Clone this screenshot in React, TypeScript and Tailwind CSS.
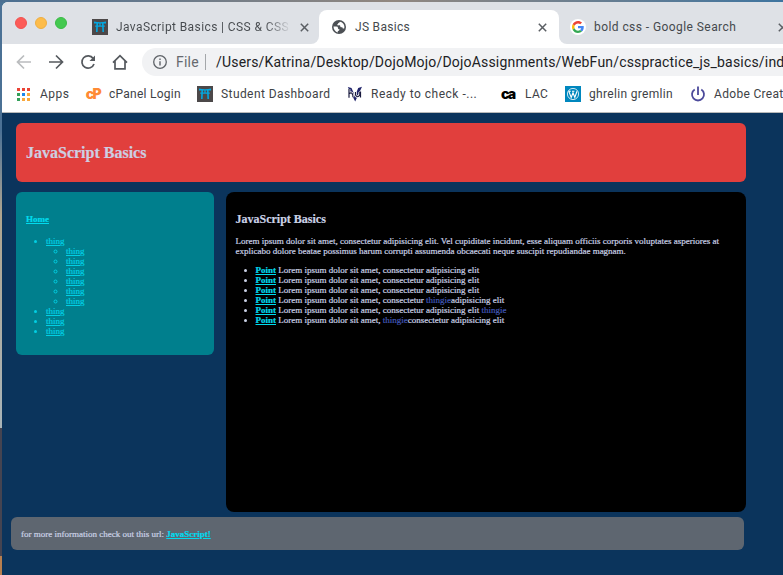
import React from 'react';

const PAGE = 'font-["Liberation_Serif",serif]';
const LINK = 'underline text-[#00dbee]';

function Torii({ className = '' }: { className?: string }) {
  return (
    <svg className={'shrink-0 ' + className} width="16" height="16" viewBox="0 0 16 16">
      <rect width="16" height="16" fill="#4c4849" />
      <path d="M2 2.6Q8 4 14 2.6V4.6H2ZM3.2 6.4H12.8V7.7H3.2ZM4.4 4.5H6L5.6 13H4ZM10 4.5H11.6L12 13H10.4ZM7.4 4.5H8.6V7H7.4Z" fill="#02a8e2" />
    </svg>
  );
}

function Close() {
  return (
    <svg className="shrink-0" width="9" height="9" viewBox="0 0 9 9" fill="none" stroke="#5a5e63" strokeWidth="1.5">
      <path d="M.8.8 8.2 8.2M8.2.8.8 8.2" />
    </svg>
  );
}

function Tabs() {
  return (
    <div className="flex h-[42px] pt-2 rounded-tl-md bg-[#dee1e6] shrink-0">
      <div className="flex w-[90px] gap-2 pl-[13px] pt-[7px]">
        <span className="size-3 rounded-full bg-[#fc5b57] border border-[#f15350]" />
        <span className="size-3 rounded-full bg-[#fdbc4a] border border-[#eeae42]" />
        <span className="size-3 rounded-full bg-[#44c950] border border-[#3abb46]" />
      </div>
      <div className="flex w-[227px] items-center">
        <Torii />
        <span className="ml-2 w-[175px] overflow-hidden whitespace-nowrap text-[12px] tracking-[0.4px] text-transparent bg-clip-text bg-linear-to-r from-[#45494d] from-85% to-[#dee1e6]">
          JavaScript Basics | CSS &amp; CSS
        </span>
        <span className="ml-[9px]"><Close /></span>
      </div>
      <div className="relative flex w-[240px] items-center rounded-t-lg bg-white">
        <span className="absolute bottom-0 -left-2 size-2 bg-white"><i className="block size-2 rounded-br-lg bg-[#dee1e6]" /></span>
        <span className="absolute bottom-0 -right-2 size-2 bg-white"><i className="block size-2 rounded-bl-lg bg-[#dee1e6]" /></span>
        <svg className="ml-[13px]" width="14" height="14" viewBox="0 0 14 14">
          <circle cx="7" cy="7" r="7" fill="#4c5055" />
          <path d="M1.5 6.6H4.3Q6 6.6 6 8T7 9.3 7.2 10.3 6 11 5.9 12.5C3.3 12 1.4 9.5 1.5 6.6ZM7.9 1.7C7.9 2.7 6.2 2.6 6.1 3.4S4.9 4.3 5.3 5.1 7.8 4.8 8.2 5.8 8 7.2 9 7.3 10.5 7.2 10.6 8 11.8 8.5 12.3 8.2C13 5 11 2.2 7.9 1.7Z" fill="#fff" />
        </svg>
        <span className="ml-[9px] w-[183px] text-[12px] tracking-[0.3px] text-[#45494d]">JS Basics</span>
        <Close />
      </div>
      <div className="flex flex-1 items-center overflow-hidden">
        <span className="ml-[11px] flex size-4 shrink-0 items-center justify-center rounded-full bg-white">
          <svg width="12" height="12" viewBox="0 0 48 48">
            <path fill="#EA4335" d="M24 9.5c3.5 0 6.7 1.2 9.2 3.6l6.9-6.9C35.9 2.4 30.5 0 24 0 14.6 0 6.5 5.4 2.6 13.2l8 6.2C12.4 13.7 17.7 9.5 24 9.5z" />
            <path fill="#4285F4" d="M47 24.6c0-1.6-.2-3.1-.4-4.6H24v9h12.9c-.6 3-2.2 5.5-4.7 7.2l7.7 6C44.4 38 47 31.9 47 24.6z" />
            <path fill="#FBBC05" d="M10.5 28.6c-.5-1.5-.8-3-.8-4.6s.3-3.1.8-4.6l-8-6.2C.9 16.5 0 20.1 0 24s.9 7.5 2.6 10.8z" />
            <path fill="#34A853" d="M24 48c6.5 0 11.9-2.1 15.9-5.8l-7.7-6c-2.2 1.5-4.9 2.3-8.2 2.3-6.3 0-11.6-4.2-13.5-9.9l-8 6.2C6.5 42.6 14.6 48 24 48z" />
          </svg>
        </span>
        <span className="ml-2 w-[184px] shrink-0 whitespace-nowrap text-[12px] tracking-[0.43px] text-[#45494d]">bold css - Google Search</span>
        <Close />
      </div>
    </div>
  );
}

function Toolbar() {
  return (
    <div className="flex h-9 shrink-0 items-center">
      <svg className="shrink-0" width="140" height="36" viewBox="0 0 140 36" fill="none" strokeWidth="1.7">
        <g stroke="#babcbe"><path d="M29 18H16M22 11.5 15.5 18 22 24.5" /></g>
        <g stroke="#55595e">
          <path d="M47 18H60M54 11.5 60.5 18 54 24.5" />
          <path d="M91.2 14.4A6.2 6.2 0 1 0 92 20" />
          <path d="M93 11.5V17H87.5Z" fill="#55595e" stroke="none" />
          <path d="M111 18.6 118 11.7 125 18.6M113 17V24.8H123V17" />
        </g>
      </svg>
      <div className="flex h-7 flex-1 items-center overflow-hidden rounded-l-full bg-[#f1f2f4]">
        <svg className="ml-[11px] shrink-0" width="14" height="14" viewBox="0 0 14 14">
          <circle cx="7" cy="7" r="6.3" fill="none" stroke="#5f6368" strokeWidth="1.3" />
          <path d="M6.3 6.2H7.7V10.5H6.3ZM6.3 3.5H7.7V5H6.3Z" fill="#5f6368" />
        </svg>
        <span className="ml-[9px] w-[29px] shrink-0 text-[14px] tracking-[0.2px] text-[#66696e]">File</span>
        <span className="h-4 w-px shrink-0 bg-[#a4a7aa]" />
        <span className="ml-[10px] whitespace-nowrap text-[14px] tracking-[0.19px] text-[#202124]">
          /Users/Katrina/Desktop/DojoMojo/DojoAssignments/WebFun/csspractice_js_basics/index.html
        </span>
      </div>
    </div>
  );
}

const APP_COLORS = ['#ea4335', '#ea4335', '#ea4335', '#34a05a', '#1a87ee', '#f9a83c', '#34a05a', '#f9a83c', '#f9a83c'];

function Bookmarks() {
  const item = 'flex shrink-0 items-center gap-2 whitespace-nowrap';
  return (
    <div className="flex h-8 shrink-0 overflow-hidden pb-1 pl-[14px] text-[12px] tracking-[0.32px] text-[#3e4246]">
      <div className={item + ' w-[69px]'}>
        <span className="ml-px mr-[2px] grid grid-cols-3 gap-[2px]">
          {APP_COLORS.map((c, i) => <i key={i} className="size-[3px]" style={{ backgroundColor: c }} />)}
        </span>
        <span className="tracking-[0.5px]">Apps</span>
      </div>
      <div className={item + ' w-[112px]'}>
        <span className="w-4 text-center font-[Inter] text-[14px] font-black leading-4 tracking-[-1.5px] text-[#ff8a35]">cP</span>
        <span className="tracking-[0.26px]">cPanel Login</span>
      </div>
      <div className={item + ' w-[150px]'}><Torii /><span className="tracking-[0.42px]">Student Dashboard</span></div>
      <div className={item + ' w-[154px]'}>
        <svg width="16" height="16" viewBox="0 0 16 16" fill="none">
          <path d="M.8 1 4.5 2 8 10 11.2 2 15 .8 8.2 15.5Z" fill="#20246a" />
          <path d="M2 3V11.8M2 7.7Q6 5 6 11.3M8.5 6V9Q10.5 12.5 12.8 9V6M13.5 5.5V11.5" stroke="#fff" strokeWidth="2.6" />
          <path d="M2 3V11.8M2 7.7Q6 5 6 11.3M8.5 6V9Q10.5 12.5 12.8 9V6M13.5 5.5V11.5" stroke="#17183d" strokeWidth="1.2" />
        </svg>
        <span className="tracking-[0.5px]">Ready to check -...</span>
      </div>
      <div className={item + ' w-[64px]'}>
        <span className="w-4 font-[Inter] text-[14px] font-black leading-4 tracking-[-1.8px] text-black">ca</span>
        <span>LAC</span>
      </div>
      <div className={item + ' w-[125px]'}>
        <svg width="16" height="16" viewBox="0 0 16 16">
          <rect width="16" height="16" fill="#0087be" />
          <circle cx="8" cy="8" r="5.6" fill="none" stroke="#fff" strokeWidth=".8" />
          <path d="M3.8 5.3 6.2 11.5 8 6.7 9.8 11.5 12 5.3M3.4 5.3H5.8M7 5.3H9.4" fill="none" stroke="#fff" strokeWidth="1.1" />
        </svg>
        <span>ghrelin gremlin</span>
      </div>
      <div className={item}>
        <svg width="16" height="16" viewBox="0 0 16 16" fill="none" stroke="#4c4a9b" strokeWidth="1.8">
          <path d="M4.7 3.5A6 6 0 1 0 11.3 3.5M8 .5V9" />
        </svg>
        <span>Adobe Creative Cloud</span>
      </div>
    </div>
  );
}

function Point({ children }: { children: React.ReactNode }) {
  return (
    <li>
      <a className={LINK + ' font-bold'}>Point</a> {children}
    </li>
  );
}

function Thingie() {
  return <span className="text-[#4258b8]">thingie</span>;
}

function Page() {
  return (
    <div className={PAGE + ' flex-1 bg-[#0b345c] pl-[9px] pt-[10px] text-[9px] leading-[10px] text-[#cbd2e6] [-webkit-text-stroke:0.2px]'}>
      <header className="ml-[5px] flex h-[59px] w-[730px] items-center rounded-md bg-[#e13f3d] px-[10px]">
        <h1 className="text-[16px] font-bold leading-5 text-[#cdcfe2]">JavaScript Basics</h1>
      </header>
      <div className="ml-[5px] mt-[10px] flex items-start gap-3">
        <nav className="h-[163px] w-[198px] rounded-md bg-[#007f8d] px-[10px] pt-[22px] text-[#00cfe3]">
          <a className={LINK + ' block font-bold'}>Home</a>
          <ul className="mt-3 list-disc pl-5">
            <li>
              <a className="underline">thing</a>
              <ul className="list-[circle] pl-5">
                {[1, 2, 3, 4, 5, 6].map((n) => <li key={n}><a className="underline">thing</a></li>)}
              </ul>
            </li>
            {[1, 2, 3].map((n) => <li key={n}><a className="underline">thing</a></li>)}
          </ul>
        </nav>
        <main className="h-[320px] w-[520px] rounded-lg bg-black px-[9.5px] pt-5">
          <h2 className="text-[12px] font-bold leading-[14px]">JavaScript Basics</h2>
          <p className="mt-[10px] whitespace-nowrap">
            Lorem ipsum dolor sit amet, consectetur adipisicing elit. Vel cupiditate incidunt, esse aliquam officiis corporis voluptates asperiores at<br />
            explicabo dolore beatae possimus harum corrupti assumenda obcaecati neque suscipit repudiandae magnam.
          </p>
          <ul className="mt-[9px] list-disc pl-5">
            <Point>Lorem ipsum dolor sit amet, consectetur adipisicing elit</Point>
            <Point>Lorem ipsum dolor sit amet, consectetur adipisicing elit</Point>
            <Point>Lorem ipsum dolor sit amet, consectetur adipisicing elit</Point>
            <Point>Lorem ipsum dolor sit amet, consectetur <Thingie />adipisicing elit</Point>
            <Point>Lorem ipsum dolor sit amet, consectetur adipisicing elit <Thingie /></Point>
            <Point>Lorem ipsum dolor sit amet, <Thingie />consectetur adipisicing elit</Point>
          </ul>
        </main>
      </div>
      <footer className="mt-[5px] flex h-[33px] w-[733px] items-center rounded-md bg-[#5e6670] px-[10px]">
        <p>for more information check out this url: <a className={LINK + ' font-bold'}>JavaScript!</a></p>
      </footer>
    </div>
  );
}

export default function App() {
  return (
    <div className='flex h-[575px] w-[783px] flex-col overflow-hidden bg-[#4b7594] font-["Roboto",sans-serif]'>
      <div className="h-[2px] shrink-0 bg-linear-to-r from-[#4b6f91] via-[#91877f] to-[#3d749f]" />
      <div className="flex min-h-0 flex-1">
        <div className="flex w-[2px] shrink-0 flex-col">
          <span className="h-[426px] bg-linear-to-b from-[#4b7195] from-30% via-[#b0a58f] via-50% to-[#a9b4b8]" />
          <span className="h-[128px] bg-[#454451]" />
          <span className="flex-1 bg-[#b87f4f]" />
        </div>
        <div className="flex min-w-0 flex-1 flex-col rounded-tl-md bg-white">
          <Tabs />
          <Toolbar />
          <Bookmarks />
          <div className="h-px shrink-0 bg-[#b8b9b9]" />
          <Page />
        </div>
      </div>
    </div>
  );
}
